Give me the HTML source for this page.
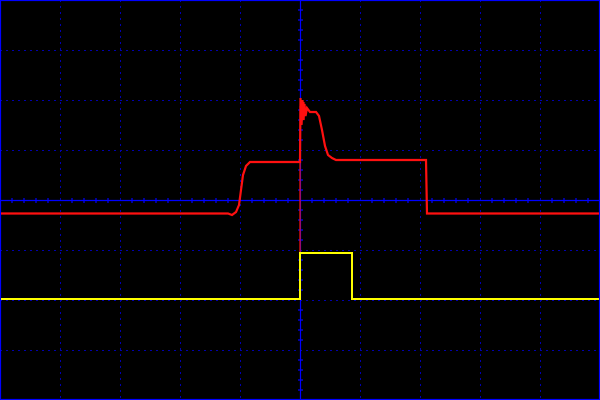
<!DOCTYPE html>
<html><head><style>html,body{margin:0;padding:0;background:#000;}svg{display:block}</style></head>
<body>
<svg width="600" height="400" viewBox="0 0 600 400" xmlns="http://www.w3.org/2000/svg">
<rect width="600" height="400" fill="#000"/>
<g stroke="#0000b0" stroke-width="1" stroke-dasharray="2 4" fill="none">
<path d="M60.5 0V400M120.5 0V400M180.5 0V400M240.5 0V400M360.5 0V400M420.5 0V400M480.5 0V400M540.5 0V400"/>
<path d="M0 50.5H600M0 100.5H600M0 150.5H600M0 250.5H600M0 300.5H600M0 350.5H600"/>
</g>
<g stroke="#0000ff" stroke-width="1.2" fill="none">
<path d="M300.5 0V400M0 200.5H600"/>
<rect x="0.5" y="0.5" width="599" height="399"/>
</g>
<g stroke="#0000ff" stroke-width="1.2">
<path d="M12 198V203M24 198V203M36 198V203M48 198V203M72 198V203M84 198V203M96 198V203M108 198V203M132 198V203M144 198V203M156 198V203M168 198V203M192 198V203M204 198V203M216 198V203M228 198V203M252 198V203M264 198V203M276 198V203M288 198V203M312 198V203M324 198V203M336 198V203M348 198V203M372 198V203M384 198V203M396 198V203M408 198V203M432 198V203M444 198V203M456 198V203M468 198V203M492 198V203M504 198V203M516 198V203M528 198V203M552 198V203M564 198V203M576 198V203M588 198V203"/>
<path d="M298 10H303M298 20H303M298 30H303M298 40H303M298 60H303M298 70H303M298 80H303M298 90H303M298 110H303M298 120H303M298 130H303M298 140H303M298 160H303M298 170H303M298 180H303M298 190H303M298 210H303M298 220H303M298 230H303M298 240H303M298 260H303M298 270H303M298 280H303M298 290H303M298 310H303M298 320H303M298 330H303M298 340H303M298 360H303M298 370H303M298 380H303M298 390H303"/>
</g>
<path d="M1 213.5H228L232 215L236 212L239 205L241 190L243 175L246 166L250 162H300L300.5 98L301.5 125L302.5 100L303.5 120L304.5 104L305.5 116L307 108L310 112H316L319 116L322 130L325 146L328 155L332 158L336 160H426L427 213.5H599" fill="none" stroke="#ff1010" stroke-width="2.2"/>
<path d="M300 298V106M302 100V124M304 102V120" stroke="#ff1010" stroke-width="1.2"/>
<path d="M1 299H300V253H352V299H599" fill="none" stroke="#ffff00" stroke-width="2"/>
</svg>
</body></html>
